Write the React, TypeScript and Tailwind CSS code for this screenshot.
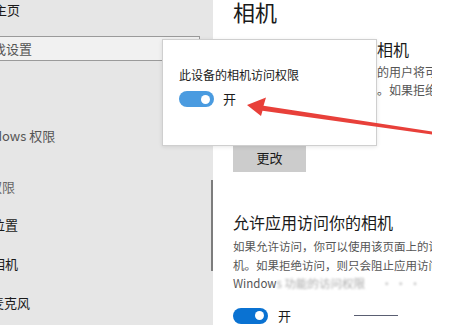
import React from "react";

const Toggle = ({ color }: { color: string }) => (
  <div className={`w-[35px] h-[16px] rounded-full flex items-center justify-end pr-[4px] ${color}`}>
    <div className="w-[9px] h-[9px] rounded-full bg-white" />
  </div>
);

export default function App() {
  return (
    <div className="relative w-[476px] h-[325px] overflow-hidden flex bg-white font-['Noto_Sans_CJK_SC','Noto_Sans',sans-serif] text-[#1a1a1a]">
      {/* Sidebar */}
      <div className="relative w-[213px] shrink-0 bg-[#e6e6e6] flex flex-col text-[13px] leading-[20px] whitespace-nowrap">
        <div className="h-[20px] ml-[-6px]">主页</div>
        <div className="mt-[16px] h-[25px] ml-[-30px] w-[230px] border border-[#9a9a9a] bg-[#f1f1f1] flex items-center pl-[9px] text-[#555]">
          查找设置
        </div>
        <div className="mt-[65px] ml-[-29px] text-[#555]">Windows 权限</div>
        <div className="mt-[31px] ml-[-37px] text-[#666]">应用权限</div>
        <div className="mt-[18px] ml-[-8px]">位置</div>
        <div className="mt-[19px] ml-[-8px]">相机</div>
        <div className="mt-[19px] ml-[-9px]">麦克风</div>
        {/* scrollbar */}
        <div className="absolute left-[211px] top-[180px] w-[2px] h-[91px] bg-[#7d7d7d]" />
      </div>

      {/* Main */}
      <div className="pl-[20px] w-[219px] overflow-hidden flex flex-col whitespace-nowrap">
        <div className="text-[22px] leading-[22px]">相机</div>
        <div className="mt-[17px] text-[16px] leading-[20px]">允许在此设备上访问相机</div>
        <div className="mt-[4px] text-[12px] leading-[18px] text-[#555]">
          <div>允许访问时，使用此台设备的用户将可以</div>
          <div>以选择其应用能否访问相机。如果拒绝访问</div>
        </div>
        <div className="mt-[44px] w-[73px] h-[29px] bg-[#cccccc] flex items-center justify-center text-[13px]">
          更改
        </div>
        <div className="mt-[40px] text-[16px] leading-[20px]">允许应用访问你的相机</div>
        <div className="mt-[5px] text-[11.5px] leading-[18.5px] text-[#555]">
          <div>如果允许访问，你可以使用该页面上的设置</div>
          <div>机。如果拒绝访问，则只会阻止应用访问</div>
          <div>
            Window<span className="blur-[1px] text-[#aaa]">s 功能的访问权限</span>
            <span className="ml-[16px] blur-[1px] text-[#bbb]">· · ·</span>
          </div>
        </div>
        <div className="mt-[15px] flex items-center">
          <Toggle color="bg-[#0a72d2]" />
          <span className="ml-[10px] text-[13px] leading-[16px]">开</span>
          <div className="ml-[63px] w-[44px] h-px bg-[#5a5f72]" />
        </div>
      </div>

      {/* Popup */}
      <div className="absolute left-[162px] top-[39px] w-[215px] h-[107px] bg-white border border-[#cfcfcf] shadow-[0_1px_4px_rgba(0,0,0,0.1)] pl-[16px] pt-[26px]">
        <div className="text-[12px] leading-[18px]">此设备的相机访问权限</div>
        <div className="mt-[7px] flex items-center">
          <Toggle color="bg-[#4a9be0]" />
          <span className="ml-[9px] text-[13px] leading-[16px]">开</span>
        </div>
      </div>

      {/* Red arrow */}
      <svg className="absolute left-0 top-0 pointer-events-none" width="476" height="325" viewBox="0 0 476 325">
        <polygon
          points="247,105 266,97.5 263.5,105.8 432,131.5 432,134.5 262.5,110.8 261,116"
          fill="#e8403a"
        />
      </svg>
    </div>
  );
}
